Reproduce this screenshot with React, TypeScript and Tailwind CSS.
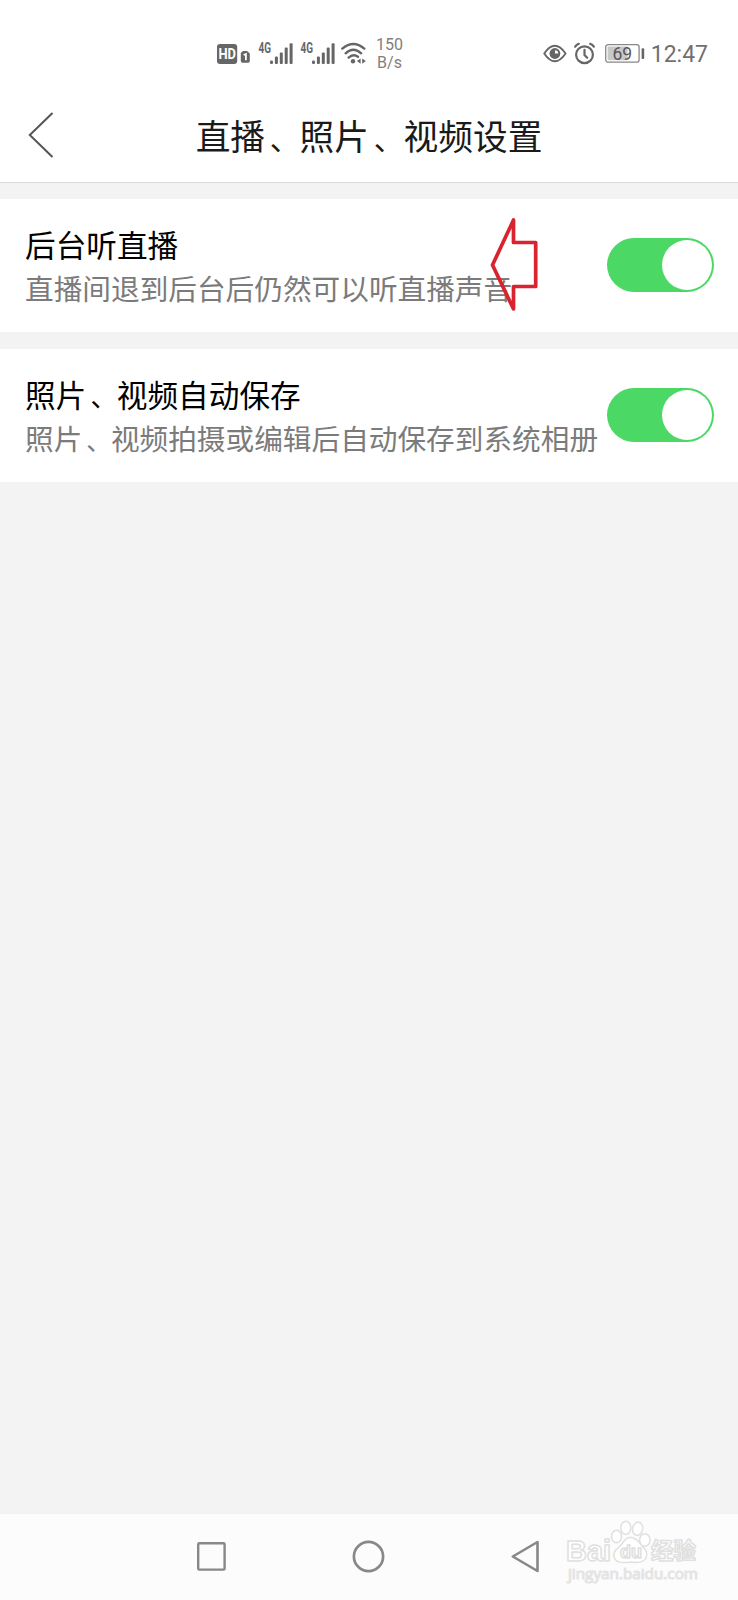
import { useState } from 'react';

interface SettingItem {
  id: string;
  title: string;
  description: string;
  enabled: boolean;
}

function SignalIcon() {
  return (
    <svg className="overflow-visible" width="35" height="28" viewBox="0 -4 35 28" fill="#666">
      <text x="-0.5" y="10.5" fontSize="14" fontWeight="700" fontFamily="Roboto, sans-serif" textLength="12.5" lengthAdjust="spacingAndGlyphs">4G</text>
      <rect x="11" y="18.5" width="3" height="3.5" rx="1.2" />
      <rect x="15.9" y="14.5" width="3" height="7.5" rx="1" />
      <rect x="20.8" y="10.5" width="3" height="11.5" rx="1" />
      <rect x="25.7" y="5.5" width="3" height="16.5" rx="1" />
      <rect x="30.6" y="1.2" width="3" height="20.8" rx="1" />
    </svg>
  );
}

function StatusBar() {
  return (
    <div className="h-[90px] pt-[34px] pl-[217px] pr-[30px] flex items-start justify-between text-[#666]">
      <div className="flex items-start">
        <svg className="mt-2 mr-2" width="34" height="24" viewBox="0 0 34 24">
          <rect x="0" y="2" width="20.2" height="20" rx="3" fill="#666" />
          <text x="1.5" y="17.2" fontSize="14" fontWeight="700" fill="#fff" fontFamily="Roboto, sans-serif" textLength="17.5" lengthAdjust="spacingAndGlyphs">HD</text>
          <path d="M26 9H30L32.8 11.5V19Q32.8 20.8 31.2 20.8H25.4Q23.8 20.8 23.8 19V11Z" fill="#666" />
          <path d="M26.6 13L28.9 12V18.3" fill="none" stroke="#fff" strokeWidth="1.8" />
        </svg>
        <div className="flex gap-[7px] mt-1">
          <SignalIcon />
          <SignalIcon />
        </div>
        <svg className="mt-2 ml-[5px]" width="26" height="24" viewBox="0 0 26 24" fill="none" stroke="#666" strokeWidth="2.4" strokeLinecap="round">
          <path d="M1.3 6.6Q12.3 -2.8 23.3 6.6" />
          <path d="M4.6 11.3Q12.3 4.2 20.2 11.3" />
          <path d="M7.6 15.6Q12.3 11.1 17 14.8" />
          <circle cx="12" cy="19.3" r="2.2" fill="#666" stroke="none" />
          <path d="M19.6 16.4V21.8L16 19.1ZM21.2 16.4V21.8L24.8 19.1Z" fill="#666" stroke="none" />
        </svg>
        <div className="ml-[9px] mt-[2px] font-[Roboto,sans-serif] text-[16px] leading-[18px] text-center text-[#808080]">
          <div>150</div>
          <div>B/s</div>
        </div>
      </div>

      <div className="flex items-start">
        <svg className="mt-2" width="24" height="24" viewBox="0 0 24 24" fill="none" stroke="#666" strokeWidth="1.9">
          <path d="M1.2 11.5Q11.8 -4 22.6 11.5Q11.8 27 1.2 11.5Z" strokeLinejoin="round" />
          <circle cx="11.9" cy="11.5" r="5.4" fill="#666" stroke="none" />
          <path d="M12 11.5V8.2A3.3 3.3 0 0 1 15.2 11.5Z" fill="#fff" stroke="none" />
        </svg>
        <svg className="mt-2 ml-[7px]" width="22" height="24" viewBox="0 0 22 24" fill="none" stroke="#666" strokeWidth="2.2" strokeLinecap="round">
          <circle cx="10.5" cy="12.7" r="8.4" />
          <path d="M10.5 7.8V13L13.2 15.8" />
          <path d="M1.2 4.7Q2.5 2.6 4.8 1.8M19.8 4.7Q18.5 2.6 16.2 1.8" />
        </svg>
        <svg className="mt-2 ml-[9px]" width="40" height="24" viewBox="0 0 40 24">
          <rect x="0.7" y="2.6" width="33.4" height="17.6" rx="2.5" fill="none" stroke="#888" strokeWidth="1.3" />
          <rect x="2.6" y="4.5" width="20" height="13.8" rx="1" fill="#c8c8c8" />
          <rect x="36.6" y="6.2" width="2.6" height="10.8" rx="1" fill="#666" />
          <text x="17.3" y="17.5" fontSize="17.5" textAnchor="middle" fill="#555" fontFamily="Roboto, sans-serif">69</text>
        </svg>
        <span className="ml-[6px] mt-[6px] font-[Roboto,sans-serif] text-[23px] leading-[30px] text-[#707070]">12:47</span>
      </div>
    </div>
  );
}

// Sets the enumeration comma nearer to the middle of its square
function Label({ text }: { text: string }) {
  return (
    <>
      {text.split('、').map((part, index) => (
        <span key={index}>
          {index > 0 && <span className="ml-[0.16em] text-[0.86em] leading-none">、</span>}
          {part}
        </span>
      ))}
    </>
  );
}

function Toggle({ enabled, onToggle }: { enabled: boolean; onToggle: () => void }) {
  return (
    <button
      role="switch"
      aria-checked={enabled}
      onClick={onToggle}
      className={`shrink-0 w-[107px] h-[54px] mb-px rounded-full p-[2px] flex items-center ${
        enabled ? 'bg-[#4cd864] justify-end' : 'bg-gray-300 justify-start'
      }`}
    >
      <span className="w-[50px] h-[50px] rounded-full bg-white" />
    </button>
  );
}

function Watermark() {
  return (
    <svg className="absolute left-[560px] top-[2px]" width="150" height="80" viewBox="0 0 150 80" fill="#fff" stroke="#e0e0e0" strokeWidth="1.5" strokeLinejoin="round">
      <text x="6" y="44.5" fontSize="29" fontWeight="700" fontFamily="Liberation Sans, sans-serif" textLength="45" lengthAdjust="spacingAndGlyphs">Bai</text>
      <ellipse cx="56.5" cy="20.5" rx="5" ry="6.3" />
      <ellipse cx="65.8" cy="11.8" rx="5" ry="6.6" />
      <ellipse cx="77.6" cy="12.8" rx="5" ry="6.6" transform="rotate(12 77.6 12.8)" />
      <ellipse cx="84.8" cy="24" rx="5.2" ry="6.3" />
      <path d="M70.5 21.5C77 21.5 79 27 83 31C87 35 88 38 86 42C84 46 78 47 71 46C64 47 57 47 55 43C52 38 55 34 59 31C64 27 64 21.5 70.5 21.5Z" />
      <text x="60" y="42" fontSize="18" fontWeight="700" fontFamily="Liberation Sans, sans-serif" textLength="22" lengthAdjust="spacingAndGlyphs">du</text>
      <text x="91" y="43" fontSize="22.5" fontWeight="700" fontFamily="Noto Sans CJK SC, sans-serif" textLength="45" lengthAdjust="spacingAndGlyphs">经验</text>
      <text x="8" y="62.5" fontSize="14.5" fontFamily="Open Sans, sans-serif" textLength="130" lengthAdjust="spacingAndGlyphs" stroke="#e4e4e4" strokeWidth="1.1">jingyan.baidu.com</text>
    </svg>
  );
}

export default function App() {
  const [items, setItems] = useState<SettingItem[]>([
    { id: 'background', title: '后台听直播', description: '直播间退到后台后仍然可以听直播声音', enabled: true },
    { id: 'autosave', title: '照片、视频自动保存', description: '照片、视频拍摄或编辑后自动保存到系统相册', enabled: true },
  ]);

  const toggleItem = (id: string) => {
    setItems(items.map(item =>
      item.id === id ? { ...item, enabled: !item.enabled } : item
    ));
  };

  return (
    <div className="w-[738px] h-[1600px] bg-[#f3f3f3] flex flex-col overflow-hidden font-['Noto_Sans_CJK_SC',sans-serif]">
      {/* Header */}
      <header className="bg-white border-b border-[#dcdcdc] h-[183px]">
        <StatusBar />
        <div className="h-[90px] px-7 flex items-center">
          <button className="w-[26px] shrink-0">
            <svg width="26" height="48" viewBox="0 0 26 48" fill="none" stroke="#555" strokeWidth="2">
              <path d="M24.5 2L1.8 24L24.5 46" />
            </svg>
          </button>
          <h1 className="flex-1 text-center text-[34.7px] leading-[48px] text-[#1a1a1a] pr-[26px]">
            <Label text="直播、照片、视频设置" />
          </h1>
        </div>
      </header>

      {/* Settings */}
      <main className="relative flex-1 pt-4 flex flex-col gap-[17px]">
        {items.map(item => (
          <section key={item.id} className="h-[133px] bg-white pl-[25px] pr-6 flex items-center justify-between">
            <div className="whitespace-nowrap pt-[3px]">
              <h2 className="text-[30.65px] leading-[42px] text-black">
                <Label text={item.title} />
              </h2>
              <p className="text-[28.67px] leading-[46px] text-[#7b7b7b]">
                <Label text={item.description} />
              </p>
            </div>
            <Toggle enabled={item.enabled} onToggle={() => toggleItem(item.id)} />
          </section>
        ))}

        {/* Pointer over the first row */}
        <svg className="absolute left-[488px] top-[32px]" width="52" height="98" viewBox="0 0 52 98" fill="none" stroke="#d9232e" strokeWidth="3.7">
          <path d="M4.5 50L25.5 5V27.5H47.7V71.5H25.5V94Z" strokeLinejoin="round" />
        </svg>
      </main>

      {/* Navigation bar */}
      <nav className="relative h-[86px] bg-[#fcfcfc]">
        <div className="h-full pl-[197px] pr-[198px] pb-px flex items-center justify-between">
          <svg width="29" height="29" viewBox="0 0 29 29" fill="none" stroke="#888" strokeWidth="2.4">
            <rect x="1.2" y="1.2" width="26.4" height="26.4" rx="1" />
          </svg>
          <svg width="33" height="33" viewBox="0 0 33 33" fill="none" stroke="#888" strokeWidth="2.7">
            <circle cx="16.5" cy="16.5" r="14.6" />
          </svg>
          <svg width="29" height="33" viewBox="0 0 29 33" fill="none" stroke="#888" strokeWidth="2.6" strokeLinejoin="round">
            <path d="M26.5 2V31L1.8 16.5Z" />
          </svg>
        </div>
        <Watermark />
      </nav>
    </div>
  );
}
